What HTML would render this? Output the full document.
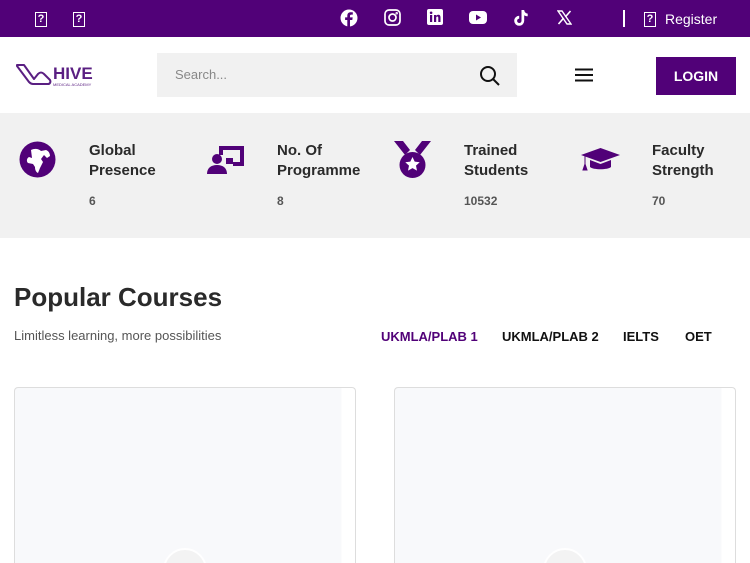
<!DOCTYPE html>
<html><head><meta charset="utf-8"><style>
*{box-sizing:border-box;margin:0;padding:0}
html,body{width:750px;height:563px;overflow:hidden}
body{background:#fff;font-family:"Liberation Sans",Arial,sans-serif;color:#222;position:relative}
.top{position:absolute;left:0;top:0;width:750px;height:37px;background:#510178}
.q{position:absolute;top:12px;width:12px;height:15px;border:1.5px solid #fff;color:#fff;font-size:11px;line-height:12px;text-align:center;font-weight:bold}
.ic{position:absolute;top:9px}
.nav{position:absolute;top:37px;left:0;width:750px;height:76px;background:#fff}
.search{position:absolute;left:157px;top:53px;width:360px;height:44px;background:#f1f1f1}
.search span{position:absolute;left:18px;top:14px;font-size:13px;color:#888}
.login{position:absolute;left:656px;top:57px;width:80px;height:38px;background:#510178;color:#fff;font-weight:bold;font-size:14px;text-align:center;line-height:38px}
.stats{position:absolute;left:0;top:113px;width:750px;height:125px;background:#f1f1f1}
.st{position:absolute;top:141px;font-weight:bold;font-size:15px;line-height:20px;color:#2a2a2a}
.num{position:absolute;top:194px;font-weight:bold;font-size:12px;color:#555}
h2{position:absolute;left:14px;top:282px;font-size:26px;font-weight:bold;color:#2a2a2a}
.sub{position:absolute;left:14px;top:328px;font-size:13px;color:#555}
.tab{position:absolute;top:329px;font-size:13px;font-weight:bold;color:#111}
.card{position:absolute;top:387px;width:342px;height:176px;border:1px solid #ddd;border-bottom:none;border-radius:4px 4px 0 0;background:linear-gradient(90deg,#f8f9fb 96%,#fff 96%);overflow:hidden}
.card i{position:absolute;left:148px;top:160px;width:44px;height:44px;border-radius:50%;background:#f3f3f3;border:2px solid #fff}
</style></head><body>
<div class="top"></div>
<div class="q" style="left:35px">?</div><div class="q" style="left:73px">?</div>
<svg class="ic" style="left:340px" width="18" height="18" viewBox="0 0 18 18"><circle cx="9" cy="9" r="8.5" fill="#fff"/><path d="M10 18V11h2.3l.4-2.6H10V6.9c0-.8.3-1.3 1.4-1.3h1.4V3.3c-.3 0-1.1-.1-2.1-.1-2.1 0-3.4 1.2-3.4 3.5v1.7H5.1V11h2.2v7z" fill="#510178"/></svg>
<svg class="ic" style="left:384px" width="17" height="17" viewBox="0 0 17 17" fill="none" stroke="#fff" stroke-width="1.7"><rect x="1" y="1" width="15" height="15" rx="4"/><circle cx="8.5" cy="8.5" r="3.5"/><circle cx="12.7" cy="4.3" r=".4" fill="#fff"/></svg>
<svg class="ic" style="left:427px" width="16" height="16" viewBox="0 0 16 16"><rect width="16" height="16" rx="2" fill="#fff"/><rect x="3" y="6" width="2.2" height="7" fill="#510178"/><circle cx="4.1" cy="3.8" r="1.3" fill="#510178"/><path d="M7 6h2v1c.5-.8 1.3-1.2 2.3-1.2 1.6 0 2.2 1 2.2 2.8V13h-2.2V9c0-1-.3-1.5-1-1.5-.8 0-1.1.6-1.1 1.5v4H7z" fill="#510178"/></svg>
<svg class="ic" style="left:469px;top:11px" width="18" height="13" viewBox="0 0 18 13"><rect width="18" height="13" rx="4" fill="#fff"/><path d="M7 3.5v6l5-3z" fill="#510178"/></svg>
<svg class="ic" style="left:513px" width="16" height="18" viewBox="0 0 16 18"><path d="M8.5 1h2.7c.2 2 1.5 3.4 3.5 3.6v2.7c-1.3 0-2.5-.4-3.5-1.1v5.6a5 5 0 1 1-5-5v2.8a2.2 2.2 0 1 0 2.3 2.2z" fill="#fff"/></svg>
<svg class="ic" style="left:557px;top:10px" width="15" height="15" viewBox="0 0 15 15"><path d="M1 1h4l9 13h-4z" fill="none" stroke="#fff" stroke-width="1.4"/><path d="M13.5 1L8.3 7M1.5 14l5.2-6" stroke="#fff" stroke-width="1.6"/></svg>
<div style="position:absolute;left:623px;top:10px;width:2px;height:17px;background:#fff"></div>
<div class="q" style="left:644px">?</div>
<div style="position:absolute;left:665px;top:11px;color:#fff;font-size:14px">Register</div>
<div class="nav"></div>
<svg style="position:absolute;left:15px;top:62px" width="82" height="28" viewBox="0 0 82 28"><path d="M2 3h7l10 14 4-5c2-2 4-2 6 0l6 6c1 2 0 4-2 4H18c-2 0-3-1-4-2L2 4z" fill="none" stroke="#5a1f82" stroke-width="2" stroke-linejoin="round"/><text x="38" y="17" font-family="Liberation Sans" font-weight="bold" font-size="17" fill="#5a1f82">HIVE</text><text x="38" y="24" font-family="Liberation Sans" font-size="4" fill="#5a1f82">MEDICAL ACADEMY</text></svg>
<div class="search"><span>Search...</span></div>
<svg style="position:absolute;left:479px;top:65px" width="22" height="22" viewBox="0 0 22 22" fill="none" stroke="#111" stroke-width="2"><circle cx="9" cy="9" r="7"/><path d="M14 14l6 6"/></svg>
<svg style="position:absolute;left:575px;top:68px" width="18" height="14"><path d="M0 1.5h18M0 7h18M0 12.5h18" stroke="#111" stroke-width="2"/></svg>
<div class="login">LOGIN</div>
<div class="stats"></div>
<svg style="position:absolute;left:19px;top:141px" width="37" height="37" viewBox="0 0 37 37"><circle cx="18.5" cy="18.5" r="18" fill="#510178"/><path d="M12 9c4-2 8-1 10 1l5-1c3 1 4 4 4 6l-3 2-3-3-3 4 2 3-3 6-2 5c-2-1-3-3-3-6l-2-3-5-1c-2-2-1-5 1-6l3 1z" fill="#fff"/></svg>
<svg style="position:absolute;left:206px;top:144px" width="39" height="31" viewBox="0 0 39 31"><path d="M13 2h25v20h-11v-4h7V6H17v5h-4z" fill="#510178"/><rect x="20" y="14" width="7" height="6" fill="#510178"/><circle cx="11" cy="15" r="5" fill="#510178"/><path d="M1 30c0-6 4-9 10-9s10 3 10 9z" fill="#510178"/></svg>
<svg style="position:absolute;left:393px;top:141px" width="39" height="38" viewBox="0 0 39 38"><path d="M1 0h9l7 9-5 5zM38 0h-9l-7 9 5 5z" fill="#510178"/><circle cx="19.5" cy="24" r="13" fill="#510178"/><path d="M19.5 16l2.2 4.6 5 .6-3.7 3.4 1 5-4.5-2.5-4.5 2.5 1-5-3.7-3.4 5-.6z" fill="#fff"/></svg>
<svg style="position:absolute;left:581px;top:148px" width="39" height="25" viewBox="0 0 39 25"><path d="M19.5 0L39 7l-19.5 7L0 7z" fill="#510178"/><path d="M9 12v7c3 3 18 3 21 0v-7l-10.5 4z" fill="#510178"/><path d="M4 8v8l-2 6h4l-2-6" fill="#510178" stroke="#510178"/></svg>
<div class="st" style="left:89px">Global<br>Presence</div><div class="num" style="left:89px">6</div>
<div class="st" style="left:277px">No. Of<br>Programme</div><div class="num" style="left:277px">8</div>
<div class="st" style="left:464px">Trained<br>Students</div><div class="num" style="left:464px">10532</div>
<div class="st" style="left:652px">Faculty<br>Strength</div><div class="num" style="left:652px">70</div>
<h2>Popular Courses</h2>
<div class="sub">Limitless learning, more possibilities</div>
<div class="tab" style="left:381px;color:#510178">UKMLA/PLAB 1</div>
<div class="tab" style="left:502px">UKMLA/PLAB 2</div>
<div class="tab" style="left:623px">IELTS</div>
<div class="tab" style="left:685px">OET</div>
<div class="card" style="left:14px"><i></i></div>
<div class="card" style="left:394px"><i></i></div>
</body></html>
